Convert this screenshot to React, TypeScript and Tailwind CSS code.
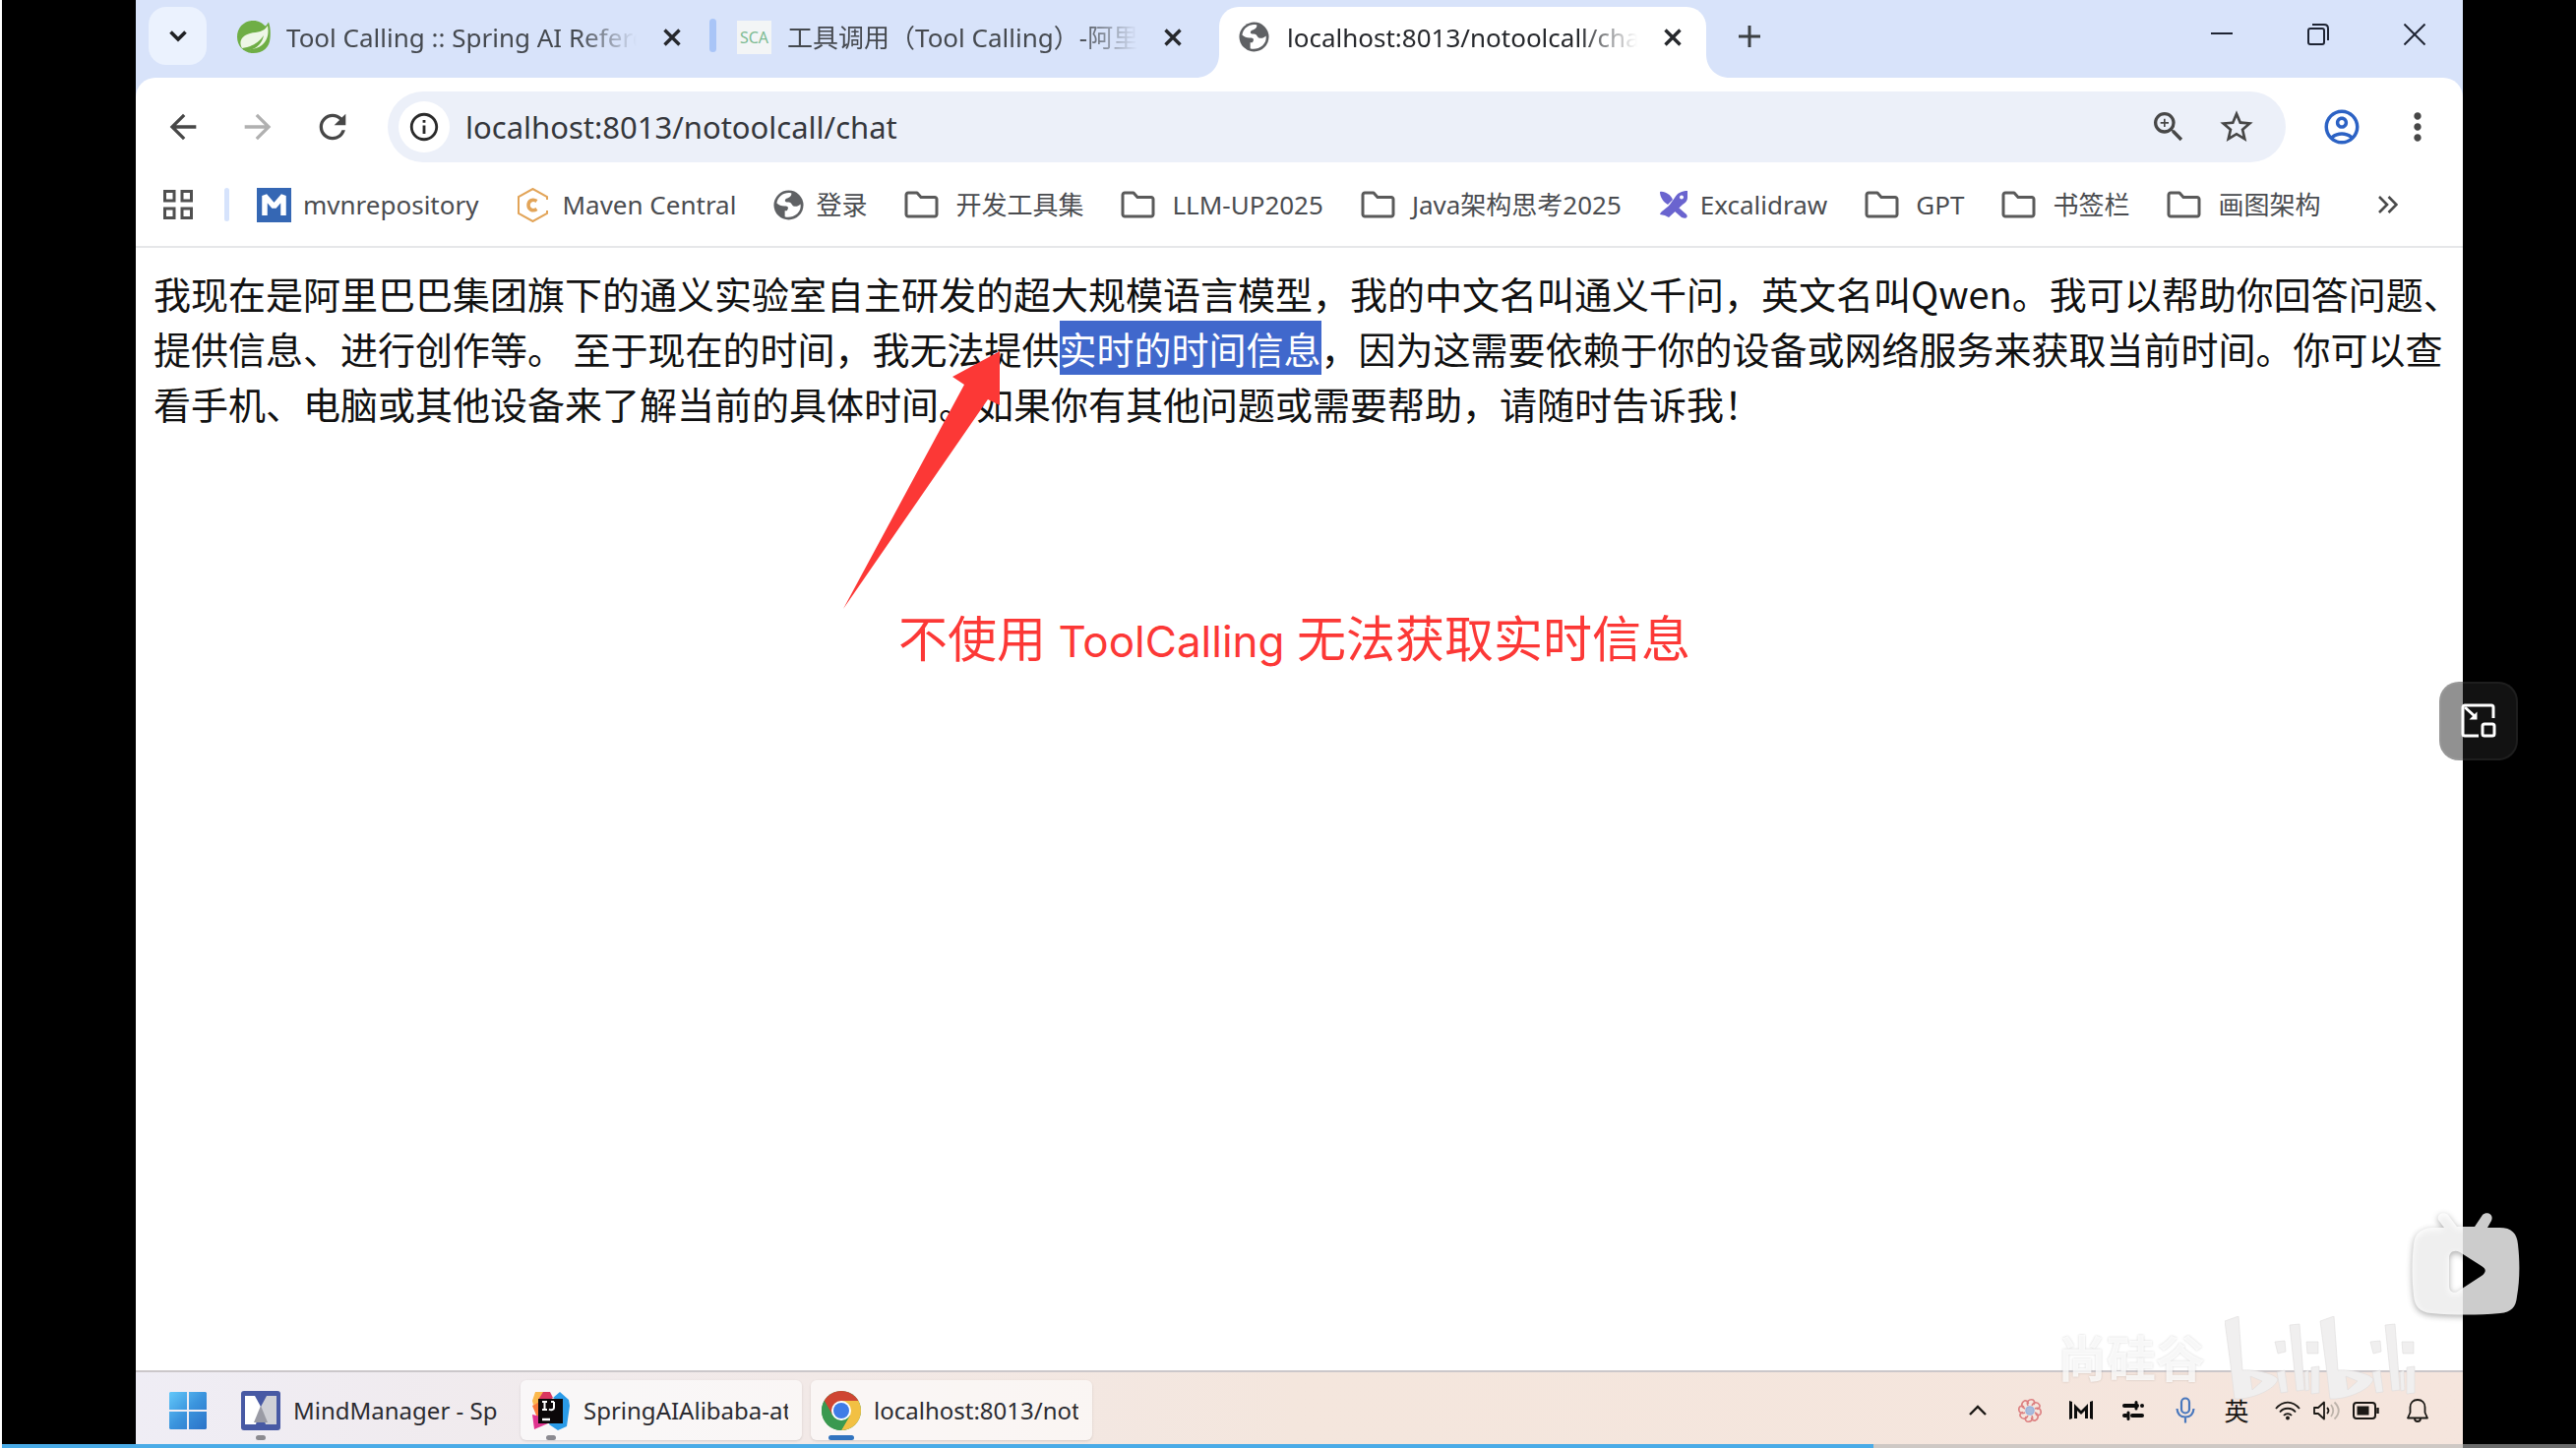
import React from "react";
import {
  MdArrowBack,
  MdArrowForward,
  MdRefresh,
  MdInfoOutline,
  MdStarOutline,
  MdZoomIn,
  MdOutlineAccountCircle,
  MdMoreVert,
} from "react-icons/md";

function SpringIcon() {
  return (
    <svg viewBox="0 0 35 35" className="h-[35px] w-[35px] shrink-0">
      <path d="M17.500 1C23 1 27 3.500 29.500 6.500C31 5.500 32 4 33 2.500C35 8 35 14 34.500 19C34 28 27 34 17.500 34C8 34 1 27 1 17.500C1 8 8 1 17.500 1Z" fill="#6fae45" />
      <path d="M32 6C28 13 22 12 14 14C6 16 2 22 6 29C10 31 20 31 26 26C32 21 33.500 14 32 6Z" fill="#eef7e6" />
      <path d="M6 29C15 27.500 23 24 28 16C26 26 18 32 8 31Z" fill="#6fae45" />
    </svg>
  );
}

function GlobeIcon() {
  return (
    <svg viewBox="0 0 32 32" className="h-[31px] w-[31px] shrink-0">
      <circle cx="16" cy="16" r="15.500" fill="#5f6164" />
      <path d="M19 3.500C12 2 5 6 3.500 14C6 16 9 17.500 13 17C16 17 16 20 14 22H12V28C15 29.500 21 28.500 25 25C28 22 29 19 28.500 15C26 17 24 18 21 17C19 16 19 13 16 13C13 13 11 12 13 9.500C15 8 19 8 19 3.500Z" fill="#fff" />
    </svg>
  );
}

function FolderIcon() {
  return (
    <svg viewBox="0 0 35 28" className="h-7 w-[35px] shrink-0" fill="none" stroke="#5a5a5a" strokeWidth="3" strokeLinejoin="round">
      <path d="M2 24V4C2 3 3 2 4 2H13L17 6.500H31C32 6.500 33 7.500 33 8.500V24C33 25 32 26 31 26H4C3 26 2 25 2 24Z" />
    </svg>
  );
}

function MvnIcon() {
  return (
    <svg viewBox="0 0 35 35" className="h-[35px] w-[35px] shrink-0">
      <rect width="35" height="35" fill="#3567b4" />
      <path d="M8 28V8L17.500 19L27 8V28" fill="none" stroke="#fff" strokeWidth="5.500" strokeLinejoin="bevel" />
    </svg>
  );
}

function MavenIcon() {
  return (
    <svg viewBox="0 0 35 35" className="h-[35px] w-[35px] shrink-0" fill="none" stroke="#e2a458">
      <path d="M32 12V9L17.500 1L3 9V26L17.500 34L32 26V23" strokeWidth="2" />
      <path d="M21.500 13.500C17 10.500 13 13.500 13 17.500C13 21.500 17 24.500 21.500 21.500" strokeWidth="3.500" />
    </svg>
  );
}

function ExcalidrawIcon() {
  return (
    <svg viewBox="0 0 30 30" className="h-[30px] w-[30px] shrink-0" fill="#6a64cf">
      <path d="M1 2C6 1 12 5 14 10L9 15C4 12 1 7 1 2Z" />
      <path d="M29 1L29 8C29 11 27 13 24 15L10 28L6 26L1 25C2 21 7 20 11 15L16 8C19 3 23 1 29 1Z" />
      <path d="M20 18L28 25C30 28 27 30 23 28L15 21Z" />
      <circle cx="23" cy="7.500" r="2" fill="#fff" />
    </svg>
  );
}

function CloseIcon() {
  return (
    <svg viewBox="0 0 18 18" className="h-[18px] w-[18px]" stroke="currentColor" strokeWidth="3.400" fill="none">
      <path d="M1.500 1.500L16.500 16.500M16.500 1.500L1.500 16.500" />
    </svg>
  );
}

function Tab({ icon, title, active }: { icon: React.ReactNode; title: string; active?: boolean }) {
  return (
    <div
      className={
        active
          ? "relative flex h-[72px] w-[495px] shrink-0 items-center rounded-t-[20px] bg-white pr-[18px] pb-[11px] pl-[18px] text-[#26282c]"
          : "relative flex h-[72px] w-[495px] shrink-0 items-center pr-[18px] pb-[11px] pl-[18px] text-[#45494f]"
      }
    >
      {active && (
        <>
          <svg viewBox="0 0 24 24" className="absolute bottom-0 -left-6 h-6 w-6" fill="#fff">
            <path d="M0 24C14 24 24 14 24 0V24Z" />
          </svg>
          <svg viewBox="0 0 24 24" className="absolute -right-6 bottom-0 h-6 w-6" fill="#fff">
            <path d="M24 24C10 24 0 14 0 0V24Z" />
          </svg>
        </>
      )}
      <button type="button" className="flex min-w-0 flex-1 items-center gap-4 text-left">
        <span className="flex w-[35px] shrink-0 justify-center">{icon}</span>
        <span className="min-w-0 flex-1 overflow-hidden text-[26px] leading-8 whitespace-nowrap [mask-image:linear-gradient(to_right,#000_calc(100%-60px),transparent)]">
          {title}
        </span>
      </button>
      <button type="button" aria-label="关闭标签页" className="ml-5 flex h-8 w-8 items-center justify-center text-[#26282c]">
        <CloseIcon />
      </button>
    </div>
  );
}

function TabStrip() {
  return (
    <header className="flex pt-[7px] pl-[13px]">
      <button type="button" aria-label="搜索标签页" className="flex h-[59px] w-[59px] shrink-0 items-center justify-center rounded-[18px] bg-[#ebf2fe]">
        <svg viewBox="0 0 18 12" className="h-3 w-[18px]" fill="none" stroke="#1f2023" strokeWidth="3.600">
          <path d="M1.500 1.500L9 9L16.500 1.500" />
        </svg>
      </button>
      <div className="w-3 shrink-0" />
      <Tab icon={<SpringIcon />} title="Tool Calling :: Spring AI Reference" />
      <div className="mt-3 flex w-[14px] shrink-0 justify-center">
        <div className="h-[34px] w-[7px] rounded-full bg-[#a9c5f7]" />
      </div>
      <Tab
        icon={<span className="flex h-[34px] w-[35px] items-center justify-center bg-[#f3f5f6] text-base text-[#7dbb92]">SCA</span>}
        title="工具调用（Tool Calling）-阿里云"
      />
      <div className="w-[13px] shrink-0" />
      <Tab active icon={<GlobeIcon />} title="localhost:8013/notoolcall/chat" />
      <button type="button" aria-label="新标签页" className="mt-[14px] ml-7 flex h-8 w-8 shrink-0 items-center justify-center">
        <svg viewBox="0 0 22 22" className="h-[22px] w-[22px]" stroke="#3c4043" strokeWidth="3">
          <path d="M11 0V22M0 11H22" />
        </svg>
      </button>
      <div className="ml-auto flex h-14 text-[#1e2433]">
        <button type="button" aria-label="最小化" className="flex w-[98px] items-center justify-center">
          <svg viewBox="0 0 22 22" className="h-[22px] w-[22px]" stroke="currentColor" strokeWidth="2">
            <path d="M0 10H22" />
          </svg>
        </button>
        <button type="button" aria-label="还原" className="flex w-[98px] items-center justify-center">
          <svg viewBox="0 0 24 24" className="h-6 w-6" fill="none" stroke="currentColor" strokeWidth="2">
            <rect x="2" y="6" width="16" height="16" rx="2" />
            <path d="M6 2H18C21 2 22 4 22 6V18" />
          </svg>
        </button>
        <button type="button" aria-label="关闭" className="flex w-[98px] items-center justify-center">
          <svg viewBox="0 0 22 22" className="h-[22px] w-[22px]" stroke="currentColor" strokeWidth="2">
            <path d="M0.500 0.500L21.500 21.500M21.500 0.500L0.500 21.500" />
          </svg>
        </button>
      </div>
    </header>
  );
}

function AddressBar() {
  return (
    <div className="flex items-center gap-9 pt-[14px] pr-6 pl-7 text-[#474747]">
      <button type="button" aria-label="后退">
        <MdArrowBack className="h-10 w-10" />
      </button>
      <button type="button" aria-label="前进" className="text-[#b0b0b0]">
        <MdArrowForward className="h-10 w-10" />
      </button>
      <button type="button" aria-label="重新加载">
        <MdRefresh className="h-10 w-10" />
      </button>
      <div className="flex h-[72px] min-w-0 flex-1 items-center rounded-full bg-[#ecf0f9] pr-[30px] pl-[11px]">
        <button type="button" aria-label="网站信息" className="flex h-[52px] w-[52px] shrink-0 items-center justify-center rounded-full bg-white text-[#2a2a2a]">
          <MdInfoOutline className="h-[34px] w-[34px]" />
        </button>
        <input
          aria-label="地址"
          defaultValue="localhost:8013/notoolcall/chat"
          className="ml-4 min-w-0 flex-1 bg-transparent text-[31px] leading-10 text-[#35373c] outline-none"
        />
        <div className="flex gap-[29px]">
          <button type="button" aria-label="缩放">
            <MdZoomIn className="h-10 w-10" />
          </button>
          <button type="button" aria-label="收藏">
            <MdStarOutline className="h-10 w-10" />
          </button>
        </div>
      </div>
      <div className="flex items-center gap-[34px]">
        <button type="button" aria-label="个人资料" className="text-[#2c62c4]">
          <MdOutlineAccountCircle className="h-[42px] w-[42px]" />
        </button>
        <button type="button" aria-label="更多">
          <MdMoreVert className="h-11 w-11" />
        </button>
      </div>
    </div>
  );
}

const bookmarks = [
  { label: "mvnrepository", icon: <MvnIcon /> },
  { label: "Maven Central", icon: <MavenIcon /> },
  { label: "登录", icon: <GlobeIcon /> },
  { label: "开发工具集", folder: true },
  { label: "LLM-UP2025", folder: true },
  { label: "Java架构思考2025", folder: true },
  { label: "Excalidraw", icon: <ExcalidrawIcon /> },
  { label: "GPT", folder: true },
  { label: "书签栏", folder: true },
  { label: "画图架构", folder: true },
];

function BookmarksBar() {
  return (
    <nav className="flex h-[87px] items-center border-b-2 border-[#e6e7e9] pt-px pr-[66px] pl-7 text-[26px] leading-9 text-[#4a4c50]">
      <button type="button" aria-label="应用">
        <svg viewBox="0 0 30 30" className="h-[30px] w-[30px]" fill="none" stroke="#505050" strokeWidth="3">
          <rect x="1.500" y="1.500" width="9.500" height="9.500" />
          <rect x="19" y="1.500" width="9.500" height="9.500" />
          <rect x="1.500" y="19" width="9.500" height="9.500" />
          <rect x="19" y="19" width="9.500" height="9.500" />
        </svg>
      </button>
      <div className="mr-7 ml-8 h-[34px] w-[5px] rounded-full bg-[#d6e3fc]" />
      <div className="flex gap-[38px]">
        {bookmarks.map((b) => (
          <a
            key={b.label}
            href="#"
            className={b.folder ? "flex items-center gap-[17px] whitespace-nowrap" : "flex items-center gap-3 whitespace-nowrap"}
          >
            {b.folder ? <FolderIcon /> : b.icon}
            {b.label}
          </a>
        ))}
      </div>
      <button type="button" aria-label="更多书签" className="ml-auto">
        <svg viewBox="0 0 20 18" className="h-[18px] w-5" fill="none" stroke="#4a4a4a" strokeWidth="2.600">
          <path d="M1 1L9 9L1 17M10.500 1L18.500 9L10.500 17" />
        </svg>
      </button>
    </nav>
  );
}

function PageContent() {
  return (
    <main className="relative flex-1 bg-white pt-[18px] pl-[18px]">
      <p className="font-['Noto_Sans_CJK_SC',sans-serif] text-[38px] leading-[56px] text-[#111]">
        我现在是阿里巴巴集团旗下的通义实验室自主研发的超大规模语言模型，我的中文名叫通义千问，英文名叫Qwen。我可以帮助你回答问题、提供信息、进行创作等。
        {" "}至于现在的时间，我无法提供<mark className="bg-[#4068cc] text-white">实时的时间信息</mark>
        ，因为这需要依赖于你的设备或网络服务来获取当前时间。你可以查看手机、电脑或其他设备来了解当前的具体时间。如果你有其他问题或需要帮助，请随时告诉我！
      </p>
      <svg viewBox="0 0 160 262" className="absolute top-[105px] left-[719px] h-[262px] w-40" fill="#fc3836">
        <path d="M159 0L111 26L123 34L0 262L147 49L159 55Z" />
      </svg>
      <p className="absolute top-[363px] left-[775px] font-[Inter,'Noto_Sans_CJK_SC',sans-serif] text-[50px] leading-[70px] whitespace-nowrap text-[#fc3836]">
        不使用<span className="text-[44px]"> ToolCalling </span>无法获取实时信息
      </p>
    </main>
  );
}

function WindowsIcon() {
  return (
    <svg viewBox="0 0 38 38" className="h-[38px] w-[38px]">
      <defs>
        <linearGradient id="win" x1="0" y1="0" x2="1" y2="1">
          <stop offset="0" stopColor="#63c8fa" />
          <stop offset="0.500" stopColor="#3b94dd" />
          <stop offset="1" stopColor="#2b72c8" />
        </linearGradient>
      </defs>
      <path d="M1 0H18V18H0V1ZM20 0H37L38 1V18H20ZM0 20H18V38H1L0 37ZM20 20H38V37L37 38H20Z" fill="url(#win)" />
    </svg>
  );
}

function MindIcon() {
  return (
    <svg viewBox="0 0 40 40" className="h-10 w-10 shrink-0">
      <rect width="40" height="40" rx="3" fill="#4759a4" />
      <path d="M4 5H14L20 16L15 34H4Z" fill="#fff" />
      <path d="M26 5H36V34H25L19 18Z" fill="#cfd0d6" />
      <path d="M20 15L27 32H13Z" fill="#9a9ba5" />
    </svg>
  );
}

function IdeaIcon() {
  return (
    <svg viewBox="0 0 40 40" className="h-10 w-10 shrink-0">
      <path d="M4 1H12V12L2 14L1 10Z" fill="#fbb84c" />
      <path d="M12 1H19L22 7L14 12L7 9Z" fill="#d9365f" />
      <path d="M22 7L29 1L38 9L39 15L36 36L27 40L18 34L28 10Z" fill="#2a9be8" />
      <path d="M1 15L14 8V26L6 27Z" fill="#fa7a3a" />
      <path d="M1 24L18 28L17 33L3 39Z" fill="#e0338f" />
      <rect x="7" y="8" width="25" height="25" fill="#0b0709" />
      <path d="M11 11H16M11 19H16M13.500 11V19M23 11V17C23 19 20 20 18 18.500M20 11H23" stroke="#fff" strokeWidth="2" fill="none" />
      <path d="M11 29H19" stroke="#fff" strokeWidth="2.500" />
    </svg>
  );
}

function ChromeIcon() {
  return (
    <svg viewBox="0 0 40 40" className="h-10 w-10 shrink-0">
      <circle cx="20" cy="20" r="20" fill="#3a9950" />
      <path d="M20 20L2.700 10A20 20 0 0 1 37.300 10Z" fill="#cf4532" />
      <path d="M20 10H37.300A20 20 0 0 1 20 40L28.700 25Z" fill="#f2c043" />
      <path d="M2.700 10L11.300 25L20 10Z" fill="#cf4532" />
      <path d="M2.700 10L11.300 25L12 26L20 30L28.700 25L20 40A20 20 0 0 1 2.700 10Z" fill="#3a9950" />
      <circle cx="20" cy="20" r="10" fill="#fff" />
      <circle cx="20" cy="20" r="8" fill="#3f7ce6" />
    </svg>
  );
}

function TaskItem({ icon, title, state }: { icon: React.ReactNode; title: string; state: "plain" | "raised" | "active" }) {
  return (
    <button
      type="button"
      className={
        state === "plain"
          ? "relative flex h-[61px] w-[286px] items-center rounded-md px-[11px] text-left"
          : "relative flex h-[61px] w-[286px] items-center rounded-md bg-white/60 px-[11px] text-left shadow-sm"
      }
    >
      {icon}
      <span className="ml-[13px] w-[208px] overflow-hidden text-2xl leading-8 whitespace-nowrap text-[#2b2b30]">{title}</span>
      <span
        className={
          state === "active"
            ? "absolute bottom-0 left-[18px] h-[5px] w-[26px] rounded-full bg-[#3274bf]"
            : "absolute bottom-0 left-[26px] h-[5px] w-[10px] rounded-full bg-[#8b8a90]"
        }
      />
    </button>
  );
}

function TrayIcons() {
  return (
    <div className="ml-auto flex h-[61px] items-center text-[#1b1815]">
      <button type="button" aria-label="显示隐藏的图标" className="flex w-[54px] justify-center">
        <svg viewBox="0 0 18 11" className="h-[11px] w-[18px]" fill="none" stroke="currentColor" strokeWidth="2.400">
          <path d="M1 10L9 2L17 10" />
        </svg>
      </button>
      <button type="button" aria-label="输入助手" className="flex w-[52px] justify-center">
        <svg viewBox="-13 -13 26 26" className="h-[26px] w-[26px]" fill="none" stroke="#dc7f80" strokeWidth="1.600">
          {[0, 45, 90, 135, 180, 225, 270, 315].map((a) => (
            <path key={a} d="M-2 -5C-4 -9 -1 -12 3 -11C5 -10 5 -8 4 -6" transform={`rotate(${a})`} />
          ))}
          <circle r="4" fill="#a9bcdc" stroke="#9cb4dc" />
        </svg>
      </button>
      <button type="button" aria-label="MindManager" className="flex w-[52px] justify-center">
        <svg viewBox="0 0 24 19" className="h-[19px] w-6" fill="#0c0c0c">
          <path d="M0 0L3 1V18L0 19ZM5 3L12 10L19 3V18H16V10L12 14L8 10V18H5ZM24 0L21 1V18L24 19Z" />
        </svg>
      </button>
      <button type="button" aria-label="设置" className="flex w-[54px] justify-center">
        <svg viewBox="0 0 22 20" className="h-5 w-[22px]" stroke="#0c0c0c" strokeWidth="4" strokeLinecap="round">
          <path d="M2 5H15M2 15H4M10 15H20" />
          <path d="M20 5V5.100" />
          <path d="M14 1.500V8M6 12V18.500" strokeWidth="3" />
        </svg>
      </button>
      <button type="button" aria-label="麦克风" className="flex w-[52px] justify-center">
        <svg viewBox="0 0 20 27" className="h-[27px] w-5" fill="none" stroke="#4a78bd" strokeWidth="2.200">
          <rect x="6" y="1.500" width="8" height="15" rx="4" />
          <path d="M1.500 12C2 18 5 20.500 10 20.500S18 18 18.500 12M10 20.500V26.500" />
        </svg>
      </button>
      <button type="button" className="w-[52px] text-center text-[25px] leading-8">
        英
      </button>
      <button type="button" aria-label="网络" className="flex w-[52px] justify-center">
        <svg viewBox="0 0 26 20" className="h-5 w-[26px]" fill="none" stroke="currentColor" strokeWidth="1.800">
          <path d="M1 8C8 -0.500 18 -0.500 25 8M5 11.500C9 6.500 17 6.500 21 11.500M9 15C11 12.500 15 12.500 17 15" />
          <circle cx="13" cy="17.500" r="1.500" fill="currentColor" stroke="none" />
          <circle cx="13" cy="17.500" r="1" />
        </svg>
      </button>
      <button type="button" aria-label="音量" className="flex w-[26px] justify-center">
        <svg viewBox="0 0 27 20" className="h-5 w-[27px] shrink-0" fill="none" stroke="currentColor" strokeWidth="1.800">
          <path d="M1 7H5L11 1.500V18.500L5 13H1Z" strokeLinejoin="round" />
          <path d="M14 7C16 9 16 11 14 13" />
          <path d="M18 4C21 8 21 12 18 16M21.500 1.500C27 7 27 13 21.500 18.500" stroke="#bdb3aa" />
        </svg>
      </button>
      <button type="button" aria-label="电池" className="flex w-[54px] justify-center">
        <svg viewBox="0 0 27 18" className="h-[18px] w-[27px]" fill="none" stroke="currentColor" strokeWidth="2">
          <rect x="1" y="1" width="22" height="16" rx="3" />
          <rect x="4.500" y="4.500" width="12" height="9" fill="currentColor" stroke="none" />
          <path d="M25.500 6V12" strokeWidth="2.500" />
        </svg>
      </button>
      <button type="button" aria-label="通知" className="flex w-[52px] justify-center">
        <svg viewBox="0 0 22 24" className="h-6 w-[22px]" fill="none" stroke="currentColor" strokeWidth="1.800" strokeLinejoin="round">
          <path d="M11 1C6.500 1 3.500 4 3.500 8.500V14L1 19.500H21L18.500 14V8.500C18.500 4 15.500 1 11 1ZM8 20C8 24 14 24 14 20" />
        </svg>
      </button>
    </div>
  );
}

function Taskbar() {
  return (
    <footer className="flex h-[79px] items-start border-t-2 border-[#cbc7ca] bg-linear-to-r from-[#efedf5] via-[#f4e6dd] to-[#f5e5dd] pt-2 pr-5 pl-[34px]">
      <button type="button" aria-label="开始" className="mr-6 flex h-[61px] shrink-0 items-center">
        <WindowsIcon />
      </button>
      <div className="flex gap-[9px]">
        <TaskItem icon={<MindIcon />} title="MindManager - SpringAI" state="plain" />
        <TaskItem icon={<IdeaIcon />} title="SpringAIAlibaba-atguigu" state="raised" />
        <TaskItem icon={<ChromeIcon />} title="localhost:8013/notoolcall" state="active" />
      </div>
      <TrayIcons />
    </footer>
  );
}

function Watermark() {
  return (
    <div className="pointer-events-none absolute right-[163px] bottom-12 flex items-center gap-5">
      <span className="text-[50px] leading-[60px] font-bold text-white/80 drop-shadow-[0_0_1px_rgba(0,0,0,0.2)]">尚硅谷</span>
      <svg viewBox="0 0 194 86" className="h-[86px] w-[194px]" fill="#f0efef" stroke="#dddcdc" strokeWidth="0.600">
        {[0, 97].map((x) => (
          <g key={x} transform={`translate(${x} 0)`}>
            <path fillRule="evenodd" d="M0 5L14 0L18 55C30 54 50 58 54 64C52 74 28 85 10 84L6 50ZM26 61L28 75L38 66Z" />
            <path d="M53 57L61 55L64 77L57 78ZM51 26L61 25L62 36L54 38ZM66 9L76 8L81 75L73 76ZM81 57L85 55L86 75L82 76ZM88 52L96 51L96 78L88 79ZM83 26L95 26L95 38L84 38Z" />
          </g>
        ))}
      </svg>
    </div>
  );
}

function PlayerOverlay() {
  return (
    <>
      <button
        type="button"
        aria-label="画中画"
        className="absolute top-[693px] right-[59px] flex h-20 w-20 items-center justify-center rounded-[20px] border-2 border-white/5 bg-[#242424]/50"
      >
        <svg viewBox="0 0 36 36" className="h-9 w-9" fill="none" stroke="#fff" strokeWidth="3" strokeLinejoin="round">
          <path d="M33 15V4C33 3 32.500 2 31 2H4C3 2 2 3 2 4V31C2 32.500 3 33 4 33H18" />
          <path d="M4 4L14 13" />
          <path d="M16.500 16.500H8.500L16.500 8.500Z" fill="#fff" stroke="none" />
          <rect x="22" y="21" width="12" height="12" rx="2" />
        </svg>
      </button>
      <svg viewBox="0 0 110 105" className="absolute right-[57px] bottom-[135px] h-[105px] w-[110px] overflow-visible drop-shadow-[0_2px_3px_rgba(0,0,0,0.4)]">
        <path
          fill="#fff"
          fillOpacity="0.800"
          fillRule="evenodd"
          d="M33 16L27 8C25 2 33 -1 37 3L46 15H64L72 3C76 -1 84 2 81 9L77 16H89C102 16 107 22 108 33C110 50 110 70 107 86C106 97 101 102 90 103C67 105 43 105 20 103C8 102 3 96 2 85C0 68 0 50 2 33C3 22 9 17 21 16ZM38 47V75C38 81 43 84 48 80L71 65C76 61 76 58 71 55L49 41C43 38 38 41 38 47Z"
        />
      </svg>
      <Watermark />
    </>
  );
}

export default function App() {
  return (
    <div className="relative flex min-h-screen flex-col border-l-2 border-white bg-black font-['Noto_Sans','Noto_Sans_CJK_SC',sans-serif]" lang="zh-CN">
      <div className="mr-[115px] ml-[136px] flex flex-1 flex-col bg-[#d8e3fa]">
        <TabStrip />
        <div className="flex flex-1 flex-col overflow-hidden rounded-t-[20px] bg-white">
          <AddressBar />
          <BookmarksBar />
          <PageContent />
        </div>
        <Taskbar />
      </div>
      <PlayerOverlay />
      <div className="absolute right-0 bottom-0 left-0 h-1 bg-[#b4b4b4]/60">
        <div className="h-full bg-[#4aabe7]" style={{ width: "72.7%" }} />
      </div>
    </div>
  );
}
